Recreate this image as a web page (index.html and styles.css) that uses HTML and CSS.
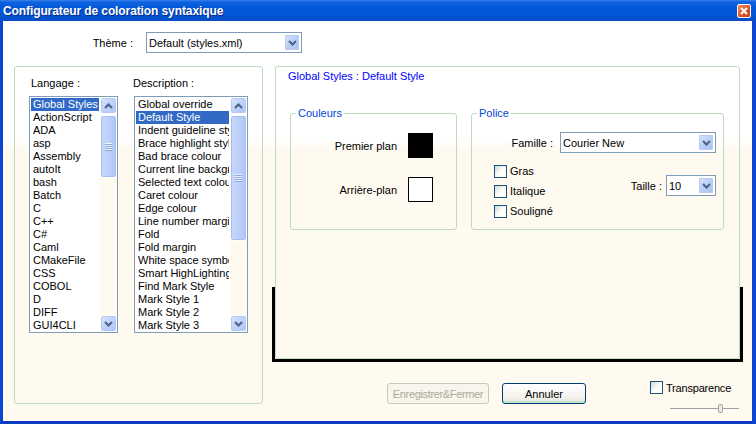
FILE: index.html
```html
<!DOCTYPE html>
<html lang="fr">
<head>
<meta charset="utf-8">
<title>Configurateur de coloration syntaxique</title>
<link rel="stylesheet" href="styles.css">
</head>
<body>
<div class="window">
  <div class="titlebar">
    <span class="title">Configurateur de coloration syntaxique</span>
    <span class="close"><svg width="8" height="8" viewBox="0 0 8 8"><path d="M1 1 L7 7 M7 1 L1 7" stroke="#fff" stroke-width="2" fill="none"/></svg></span>
  </div>
  <div class="client">
    <div class="theme-row">
      <span class="theme-label">Thème :</span>
      <div class="combo theme-combo">
        <span class="value">Default (styles.xml)</span>
        <span class="drop"><svg width="9" height="6" viewBox="0 0 9 6"><polyline points="1,1 4.5,4.5 8,1" stroke="#4D6185" stroke-width="2" fill="none"/></svg></span>
      </div>
    </div>
    <div class="main">
      <div class="lang-group">
        <div class="list-col lang-col">
          <div class="list-label">Langage :</div>
          <div class="listbox">
            <ul class="items">
              <li class="sel">Global Styles</li>
              <li>ActionScript</li>
              <li>ADA</li>
              <li>asp</li>
              <li>Assembly</li>
              <li>autoIt</li>
              <li>bash</li>
              <li>Batch</li>
              <li>C</li>
              <li>C++</li>
              <li>C#</li>
              <li>Caml</li>
              <li>CMakeFile</li>
              <li>CSS</li>
              <li>COBOL</li>
              <li>D</li>
              <li>DIFF</li>
              <li>GUI4CLI</li>
            </ul>
            <div class="scrollbar">
              <div class="sb-btn"><svg width="9" height="6" viewBox="0 0 9 6"><polyline points="1,5 4.5,1.5 8,5" stroke="#4D6185" stroke-width="2" fill="none"/></svg></div>
              <div class="sb-track">
                <div class="sb-thumb thumb-lang"><span class="grip"></span></div>
              </div>
              <div class="sb-btn"><svg width="9" height="6" viewBox="0 0 9 6"><polyline points="1,1 4.5,4.5 8,1" stroke="#4D6185" stroke-width="2" fill="none"/></svg></div>
            </div>
          </div>
        </div>
        <div class="list-col desc-col">
          <div class="list-label">Description :</div>
          <div class="listbox">
            <ul class="items">
              <li>Global override</li>
              <li class="sel">Default Style</li>
              <li>Indent guideline style</li>
              <li>Brace highlight style</li>
              <li>Bad brace colour</li>
              <li>Current line background colour</li>
              <li>Selected text colour</li>
              <li>Caret colour</li>
              <li>Edge colour</li>
              <li>Line number margin</li>
              <li>Fold</li>
              <li>Fold margin</li>
              <li>White space symbol</li>
              <li>Smart HighLighting</li>
              <li>Find Mark Style</li>
              <li>Mark Style 1</li>
              <li>Mark Style 2</li>
              <li>Mark Style 3</li>
            </ul>
            <div class="scrollbar">
              <div class="sb-btn"><svg width="9" height="6" viewBox="0 0 9 6"><polyline points="1,5 4.5,1.5 8,5" stroke="#4D6185" stroke-width="2" fill="none"/></svg></div>
              <div class="sb-track">
                <div class="sb-thumb thumb-desc"><span class="grip"></span></div>
              </div>
              <div class="sb-btn"><svg width="9" height="6" viewBox="0 0 9 6"><polyline points="1,1 4.5,4.5 8,1" stroke="#4D6185" stroke-width="2" fill="none"/></svg></div>
            </div>
          </div>
        </div>
      </div>
      <div class="right-col">
        <div class="style-box">
          <div class="style-title">Global Styles : Default Style</div>
          <div class="groups">
            <fieldset class="grp colors">
              <legend>Couleurs</legend>
              <div class="color-row first">
                <span>Premier plan</span>
                <span class="swatch fg"></span>
              </div>
              <div class="color-row">
                <span>Arrière-plan</span>
                <span class="swatch bg"></span>
              </div>
            </fieldset>
            <fieldset class="grp police">
              <legend>Police</legend>
              <div class="family-row">
                <span>Famille :</span>
                <div class="combo family-combo">
                  <span class="value">Courier New</span>
                  <span class="drop"><svg width="9" height="6" viewBox="0 0 9 6"><polyline points="1,1 4.5,4.5 8,1" stroke="#4D6185" stroke-width="2" fill="none"/></svg></span>
                </div>
              </div>
              <div class="style-row">
                <div class="checks">
                  <label class="check"><span class="box"></span><span>Gras</span></label>
                  <label class="check"><span class="box"></span><span>Italique</span></label>
                  <label class="check"><span class="box"></span><span>Souligné</span></label>
                </div>
                <div class="size">
                  <span>Taille :</span>
                  <div class="combo size-combo">
                    <span class="value">10</span>
                    <span class="drop"><svg width="9" height="6" viewBox="0 0 9 6"><polyline points="1,1 4.5,4.5 8,1" stroke="#4D6185" stroke-width="2" fill="none"/></svg></span>
                  </div>
                </div>
              </div>
            </fieldset>
          </div>
          <div class="preview-frame"></div>
        </div>
        <div class="bottom-row">
          <span class="btn disabled">Enregistrer&amp;Fermer</span>
          <span class="btn default">Annuler</span>
          <div class="transp">
            <label class="check"><span class="box"></span><span class="transp-text">Transparence</span></label>
            <div class="slider"><span class="slider-thumb"></span></div>
          </div>
        </div>
      </div>
    </div>
  </div>
</div>
</body>
</html>
```

FILE: styles.css
```css
* { box-sizing: border-box; }
html, body { margin: 0; padding: 0; }
body {
  width: 756px;
  height: 424px;
  overflow: hidden;
  font-family: "Liberation Sans", Arial, sans-serif;
  font-size: 11px;
  color: #000;
  background: #0A48D8;
}
.window {
  width: 756px;
  height: 424px;
  display: flex;
  flex-direction: column;
}
.titlebar {
  height: 21px;
  flex: none;
  display: flex;
  align-items: center;
  justify-content: space-between;
  padding: 0 5px 0 3px;
  background: linear-gradient(to bottom, #3A83EE 0, #0F62DE 2px, #0058D8 8px, #0055D2 16px, #0A4CC6 21px);
}
.title {
  color: #fff;
  font-weight: bold;
  font-size: 12px;
  letter-spacing: -0.1px;
  text-shadow: 1px 1px 0 #0A2C8F;
}
.close {
  width: 14px;
  height: 14px;
  border: 1px solid #fff;
  border-radius: 2px;
  background: linear-gradient(135deg, #F08E6C 0, #E0582C 50%, #C8441C 100%);
  display: flex;
  align-items: center;
  justify-content: center;
}
.client {
  flex: 1;
  border-left: 3px solid #0A46D2;
  border-right: 4px solid #0A46D2;
  border-bottom: 3px solid #0A3CC4;
  background: linear-gradient(to bottom, #fff 0, #fff 119px, #FEFAEF 129px, #FEFAEF 100%);
  display: flex;
  flex-direction: column;
}

/* Theme row */
.theme-row {
  margin-top: 11px;
  display: flex;
  align-items: center;
  gap: 13px;
}
.theme-label {
  width: 130px;
  text-align: right;
}
.combo {
  display: flex;
  align-items: center;
  height: 21px;
  border: 1px solid #7F9DB9;
  background: #fff;
  padding: 0 1px 0 2px;
}
.combo .value { flex: 1; white-space: nowrap; overflow: hidden; }
.drop {
  width: 16px;
  height: 17px;
  flex: none;
  display: flex;
  align-items: center;
  justify-content: center;
  border: 1px solid #fff;
  border-radius: 2px;
  background: linear-gradient(135deg, #DCE7FD 0, #BCD0F8 45%, #A9C1F3 100%);
  box-shadow: inset 0 0 0 1px #B7CAF2;
}
.theme-combo { width: 156px; }

/* Main row */
.main {
  margin-top: 13px;
  padding-left: 11px;
  display: flex;
  gap: 12px;
  align-items: flex-start;
}
.lang-group {
  width: 249px;
  height: 338px;
  border: 1px solid #BCDCBC;
  border-radius: 3px;
  padding: 10px 0 0 14px;
  display: flex;
  gap: 16px;
}
.list-label {
  height: 13px;
  line-height: 13px;
  margin-bottom: 6px;
  white-space: nowrap;
}
.lang-col .list-label { padding-left: 2px; }
.desc-col .list-label { margin-left: -1px; }
.lang-col { width: 89px; }
.desc-col { width: 114px; }
.listbox {
  height: 237px;
  border: 1px solid #7F9DB9;
  display: flex;
}
.items {
  flex: 1;
  min-width: 0;
  margin: 0;
  padding: 1px 0 0;
  list-style: none;
  background: #fff;
  overflow: hidden;
}
.items li {
  height: 13px;
  line-height: 13px;
  margin: 0 1px;
  padding-left: 2px;
  white-space: nowrap;
  overflow: hidden;
}
.items li.sel {
  background: #316AC5;
  color: #fff;
}
.scrollbar {
  width: 17px;
  flex: none;
  display: flex;
  flex-direction: column;
}
.sb-btn {
  width: 17px;
  height: 17px;
  flex: none;
  display: flex;
  align-items: center;
  justify-content: center;
  border: 1px solid #fff;
  border-radius: 3px;
  background: linear-gradient(135deg, #DCE7FD 0, #C1D3FA 45%, #AFC5F4 100%);
  box-shadow: inset 0 0 0 1px #B4C8F1;
}
.sb-track { flex: 1; }
.sb-thumb {
  margin-top: 1px;
  width: 17px;
  border: 1px solid #fff;
  border-radius: 3px;
  background: linear-gradient(to right, #C9D8FB 0, #B9CEF8 60%, #AEC4F3 100%);
  box-shadow: inset 0 0 0 1px #A8BEEE;
  display: flex;
  align-items: center;
  justify-content: center;
}
.thumb-lang { height: 63px; }
.thumb-desc { height: 126px; }
.grip {
  width: 7px;
  height: 8px;
  background: repeating-linear-gradient(to bottom, #EEF4FE 0, #EEF4FE 1px, #8CA6DE 1px, #8CA6DE 2px);
}

/* Right column */
.right-col {
  width: 465px;
  display: flex;
  flex-direction: column;
}
.style-box {
  position: relative;
  height: 293px;
  border: 1px solid #BCDCBC;
  border-radius: 3px;
  padding-top: 3px;
}
.style-title {
  padding-left: 12px;
  height: 13px;
  line-height: 13px;
  color: #0000FF;
}
.groups {
  margin: 24px 0 0 14px;
  display: flex;
  gap: 14px;
}
fieldset.grp {
  margin: 0;
  padding: 0;
  min-width: 0;
  height: 123px;
  border: 1px solid #BCDCBC;
  border-radius: 3px;
}
fieldset.grp legend {
  padding: 0 2px;
  margin-left: 5px;
  line-height: 13px;
  color: #0046D5;
}
.colors { width: 167px; }
.police { width: 253px; }
.color-row {
  display: flex;
  justify-content: flex-end;
  align-items: center;
  gap: 11px;
  padding-right: 23px;
  margin-top: 19px;
}
.color-row.first { margin-top: 13px; }
.swatch {
  width: 25px;
  height: 25px;
  border: 1px solid #000;
}
.swatch.fg { background: #000; }
.swatch.bg { background: #fff; }

.family-row {
  margin-top: 12px;
  padding-right: 7px;
  display: flex;
  justify-content: flex-end;
  align-items: center;
  gap: 7px;
}
.family-combo { width: 156px; }
.style-row {
  margin-top: 8px;
  padding: 0 7px 0 22px;
  display: flex;
  justify-content: space-between;
  align-items: flex-start;
}
.checks { display: flex; flex-direction: column; }
.check {
  height: 20px;
  display: flex;
  align-items: center;
  gap: 3px;
}
.box {
  width: 13px;
  height: 13px;
  flex: none;
  border: 1px solid #1C5180;
  background: linear-gradient(135deg, #C9DCCB 0, #E8EFE8 30%, #fff 55%);
}
.size {
  margin-top: 14px;
  display: flex;
  align-items: center;
  gap: 4px;
}
.size-combo { width: 50px; }

.preview-frame {
  position: absolute;
  left: -4px;
  right: -4px;
  top: 220px;
  bottom: -4px;
  border: 3px solid #000;
  border-top: none;
}

/* Bottom row */
.bottom-row {
  margin-top: 24px;
  padding-left: 112px;
  display: flex;
  align-items: flex-start;
}
.btn {
  height: 21px;
  display: flex;
  align-items: center;
  justify-content: center;
  border: 1px solid #003C74;
  border-radius: 3px;
  background: linear-gradient(to bottom, #fff 0, #F4F3EE 70%, #E2DFD6 100%);
  white-space: nowrap;
}
.btn.disabled {
  width: 102px;
  border-color: #C9C7BA;
  color: #ACA899;
  background: #F8F6EC;
  letter-spacing: -0.35px;
}
.btn.default {
  width: 84px;
  margin-left: 13px;
  box-shadow: inset 0 -2px 0 #C5E5C8, inset 0 1px 0 #fff;
}
.transp {
  margin-left: 64px;
  margin-top: -2px;
  width: 89px;
  display: flex;
  flex-direction: column;
  align-items: flex-start;
}
.transp .check { height: 13px; }
.transp-text { letter-spacing: -0.2px; white-space: nowrap; }
.slider {
  position: relative;
  margin: 10px 0 0 20px;
  width: 69px;
  height: 9px;
}
.slider::before {
  content: "";
  position: absolute;
  left: 0;
  right: 0;
  top: 4px;
  height: 2px;
  border-top: 1px solid #A0A0A0;
  border-bottom: 1px solid #fff;
}
.slider-thumb {
  position: absolute;
  left: 48px;
  top: 0;
  width: 5px;
  height: 9px;
  border: 1px solid #9FA79F;
  border-radius: 2px;
  background: #E2EEE0;
}
```
